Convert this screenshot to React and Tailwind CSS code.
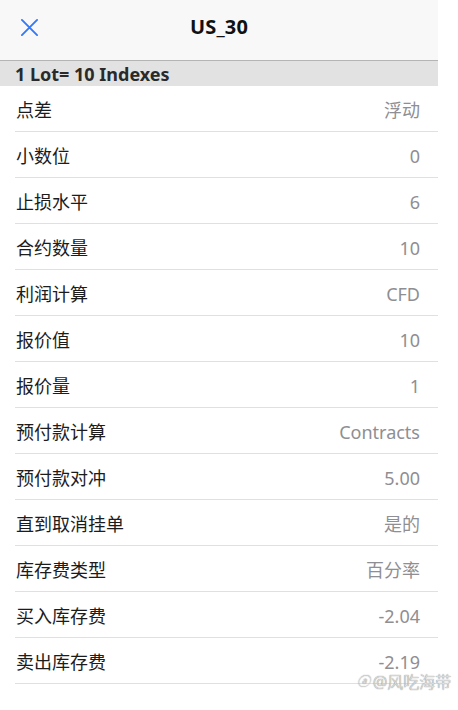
import React from 'react';

const rows = [
  { label: '点差', value: '浮动' },
  { label: '小数位', value: '0' },
  { label: '止损水平', value: '6' },
  { label: '合约数量', value: '10' },
  { label: '利润计算', value: 'CFD' },
  { label: '报价值', value: '10' },
  { label: '报价量', value: '1' },
  { label: '预付款计算', value: 'Contracts' },
  { label: '预付款对冲', value: '5.00' },
  { label: '直到取消挂单', value: '是的' },
  { label: '库存费类型', value: '百分率' },
  { label: '买入库存费', value: '-2.04' },
  { label: '卖出库存费', value: '-2.19' },
];

export default function App() {
  return (
    <div className="relative w-[458px] h-[710px] bg-white overflow-hidden font-['Noto_Sans','Noto_Sans_CJK_SC',sans-serif]">
      <div className="w-[438px]">
        <header className="h-[61px] bg-[#f8f8f8] border-b border-[#b4b4b4] flex items-center relative">
          <button className="w-[56px] h-full flex items-center justify-center pl-[2px] pb-[6px]">
            <svg width="19" height="19" viewBox="0 0 20 20" fill="none" stroke="#3478f6" strokeWidth="2" strokeLinecap="round">
              <path d="M2 2 L18 18 M18 2 L2 18" />
            </svg>
          </button>
          <h1 className="absolute left-0 right-0 top-[12px] text-center pointer-events-none text-[20px] font-bold text-[#111] tracking-[0.2px]">US_30</h1>
        </header>
        <div className="h-[25px] bg-[#e2e2e2] flex items-center pl-[15px] text-[18px] font-bold text-[#2a2a2a] leading-none">
          1 Lot= 10 Indexes
        </div>
        <div>
          {rows.map((r) => (
            <div key={r.label} className="pl-[15px]">
              <div className="h-[46px] flex items-center justify-between pr-[18px] pt-[3px] border-b border-[#e0e0e0]">
                <span className="text-[18px] text-[#1c1c1c] pl-[1px]">{r.label}</span>
                <span className="text-[18px] text-[#8e8e93]">{r.value}</span>
              </div>
            </div>
          ))}
        </div>
      </div>
      <div className="absolute left-[357px] top-[670px] flex items-center gap-[3px] text-[16px] font-light text-[#e4e4e4] [text-shadow:0_0_1px_#444]">
        <span className="text-[13px] italic">ⓐ</span>
        <span>@风吃海带</span>
      </div>
    </div>
  );
}
